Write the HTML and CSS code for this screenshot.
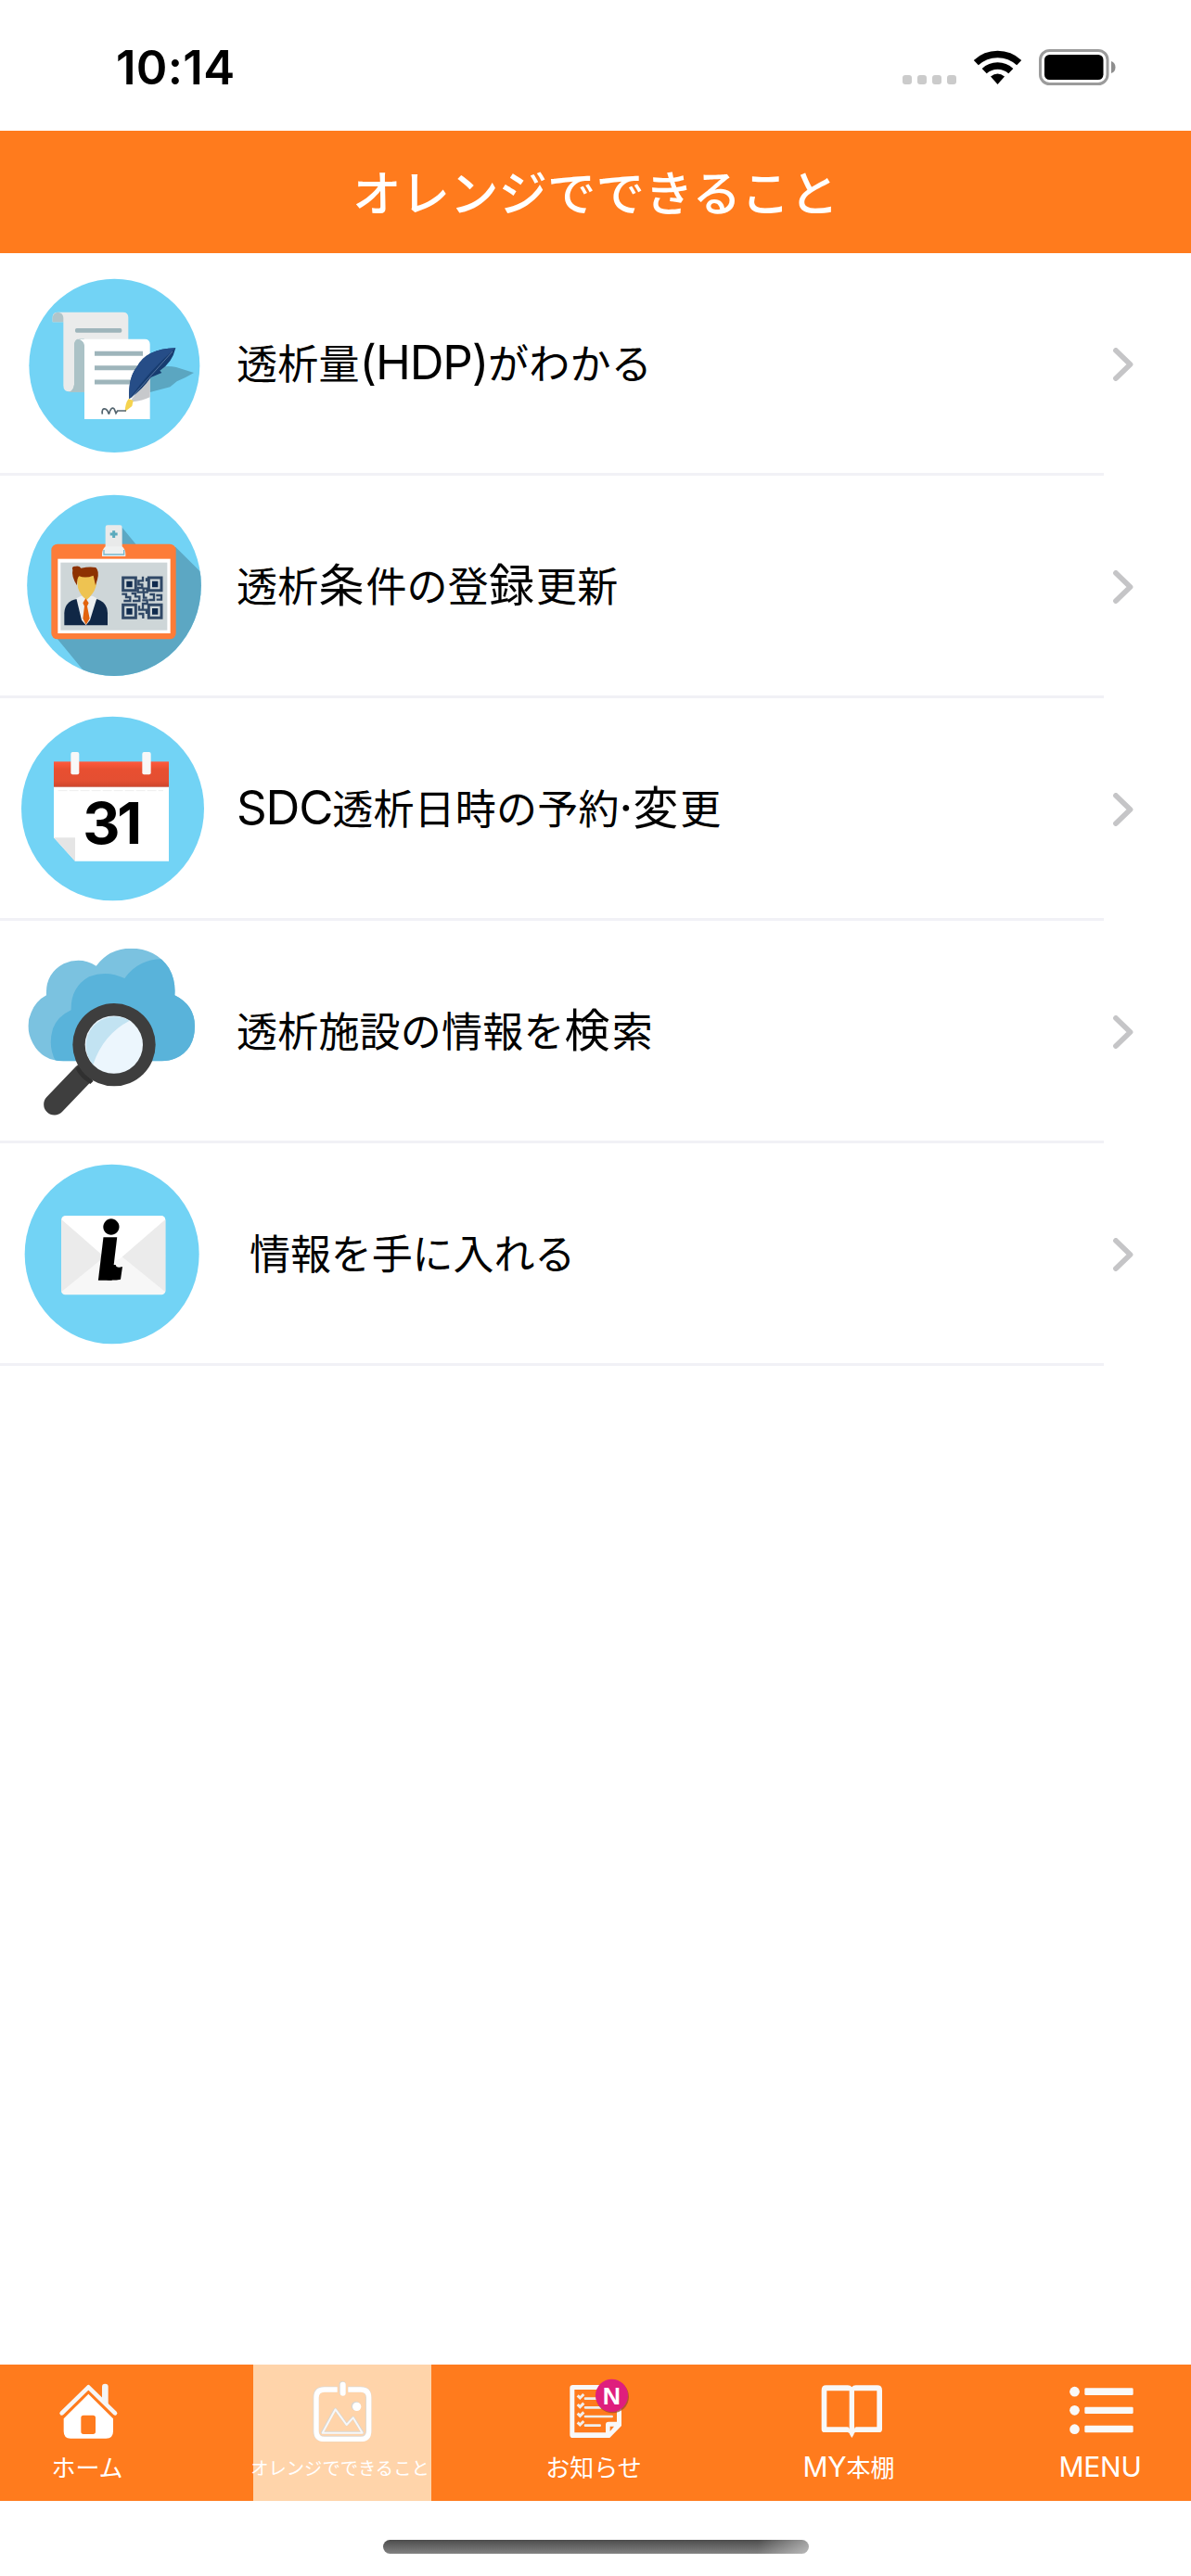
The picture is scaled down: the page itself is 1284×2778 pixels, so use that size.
FILE: index.html
```html
<!DOCTYPE html>
<html lang="ja">
<head>
<meta charset="utf-8">
<title>オレンジでできること</title>
<link rel="stylesheet" href="styles.css">
</head>
<body>
<div class="screen">
  <div class="status">
    <span class="time">10:14</span>
    <svg class="status-icons" viewBox="0 0 230 40" width="230" height="40">
      <g fill="#cbcbcb"><rect x="0" y="28" width="10" height="10" rx="3"/><rect x="16" y="28" width="10" height="10" rx="3"/><rect x="32" y="28" width="10" height="10" rx="3"/><rect x="48" y="28" width="10" height="10" rx="3"/></g>
      <g fill="none" stroke="#000" stroke-width="7.4"><path d="M79.300 14.600a34 34 0 0 1 46.400 0"/><path d="M88.200 23.600a21 21 0 0 1 28.600 0"/></g>
      <path d="M95 29.500q7.500-6 15 0L102.500 38z"/>
      <rect x="148.500" y="1.500" width="72.500" height="36" rx="10" fill="none" stroke="#9b9b9b" stroke-width="3"/>
      <rect x="153" y="6" width="63.500" height="27" rx="5.500"/>
      <path d="M225 13q4.500 1.500 4.500 6.500T225 26z" fill="#8e8e8e"/>
    </svg>
  </div>
  <header class="titlebar"><h1>オレンジでできること</h1></header>

  <ul class="list">
    <li class="row">
      <svg class="pic" viewBox="0 -21 720 711">
        <ellipse cx="370" cy="343" rx="276" ry="281" fill="#72d3f5"/>
        <path d="M170 202v-16q0-16 18-16h210q17 0 17 17v240H225q-20 0-20-20V202z" fill="#eaebeb"/>
        <path d="M170 202v-16q2-15 18-16 16 2 17 18v14z" fill="#b0c5ca"/>
        <path d="M272 256h-14q-18 2-18 22v126q-3 22-18 24h50z" fill="#abc2c6"/>
        <rect x="243" y="222" width="151" height="14" rx="5" fill="#9eb5bb"/>
        <path d="M250 257h218q17 0 17 17v242H273V278q-3-18-23-21z" fill="#fff"/>
        <path d="M250 257q-10 4-10 22v125q-3 22-18 24h51V278q-3-18-23-21z" fill="#abc2c6"/>
        <path d="M306 304h156M306 350h140M306 396h130" stroke="#9eb5bb" stroke-width="15"/>
        <path d="M485 368q35-32 85-20l57 18q-30 18-55 28l-22 18-65 17z" fill="#5ba6c1"/>
        <path d="M425 452l60-75v68q-25 12-55 15z" fill="#c7c9cc"/>
        <path d="M568 286q-95 2-126 62-28 35-24 103 42-30 70-70l35-15-6-7q40-25 51-73z" fill="#173c70"/>
        <path d="M568 286q-95 2-126 62-28 35-24 103 68-96 150-165z" fill="#264d87"/>
        <path d="M424 447L558 297" stroke="#55739e" stroke-width="3"/>
        <path d="M416 450l15 6-4 18-23 18q1-28 12-42z" fill="#f5d34e"/>
        <path d="M331 500q-3-20 10-17 8 4 11 17 8-28 18-16l5 13 5-8h28" fill="none" stroke="#53646e" stroke-width="5"/>
      </svg>
      <span class="label">透析量<span class="en hdp">(HDP)</span>がわかる</span>
      <svg class="chevron" viewBox="0 0 22 36"><path d="M3 3l15.500 15L3 33"/></svg>
    </li>
    <li class="row">
      <svg class="pic" viewBox="0 9 720 711">
        <clipPath id="badge-disc"><ellipse cx="369" cy="364" rx="281.500" ry="293"/></clipPath>
        <g clip-path="url(#badge-disc)">
          <path d="M80 60h580v610H80z" fill="#72d3f5"/>
          <path d="M180 530l115 140h370V336L568 240H447L393 174v120z" fill="#5ca7c3"/>
        </g>
        <rect x="166" y="230" width="403" height="308" rx="20" fill="#fd7c38"/>
        <rect x="187" y="278" width="364" height="241" fill="#fff"/>
        <rect x="196" y="290" width="345" height="219" fill="#ced6d8"/>
        <rect x="341" y="169" width="54" height="75" rx="7" fill="#e9eaea"/>
        <path d="M368 187v23M356 198h24" stroke="#5baabd" stroke-width="9"/>
        <path d="M341 238h54q11 10 11 24v8H330v-8q0-14 11-24z" fill="#eff1f1"/>
        <path d="M336 249v15h65v-15" fill="none" stroke="#77b7cc" stroke-width="4"/>
        <path d="M208 493v-40q2-38 40-45l60-1q39 8 40 47v39z" fill="#102746"/>
        <path d="M262 398h38l13 8-22 70-13 17-14-17-17-70z" fill="#eceff1"/>
        <path d="M249 345q2-15 6-17 35 15 52 0 8 18 3 40-7 23-30 43-22-17-28-40z" fill="#eec351"/>
        <path d="M277 406l10 15-5 10 8 40-12 20-10-20 5-40-5-10z" fill="#e2630e"/>
        <path d="M235 314q-5-13 10-12 12-2 17 6 28-6 48-2 12 12 5 38l-6 20-7-32q-25 10-46 2-7 5-7 30-19-30-14-50z" fill="#8d3202"/>
        <path d="M398 339h41v41h-41zM481 339h41v41h-41zM398 427h41v42h-41zM481 427h41v42h-41z" fill="none" stroke="#304866" stroke-width="9"/>
        <path d="M409 350h19v20h-19zM492 350h19v20h-19zM409 438h19v20h-19zM492 438h19v20h-19z" fill="#0f2a4d"/>
        <path d="M462 335v14h-14v12h12v11h-14v14h18v-12h12v12h-11v18h11M394 392h14v10h13v12h-21M425 390h13v10h13v14h-22M484 393h14v18h-17M505 396h17v14h-16M460 412h16v11h-14v20h12v13M450 430v13h10M448 456h15v15M474 340v11" fill="none" stroke="#304866" stroke-width="7"/>
      </svg>
      <span class="label">透析<span class="big">条</span>件の登<span class="big">録</span>更新</span>
      <svg class="chevron" viewBox="0 0 22 36"><path d="M3 3l15.500 15L3 33"/></svg>
    </li>
    <li class="row">
      <svg class="pic" viewBox="0 9 720 711">
        <defs><linearGradient id="cal-red" x1="0" y1="0" x2="0" y2="1"><stop offset="0" stop-color="#ff5a3d"/><stop offset=".3" stop-color="#e84f31"/><stop offset=".75" stop-color="#e44f32"/><stop offset="1" stop-color="#ce462d"/></linearGradient></defs>
        <ellipse cx="364.500" cy="366" rx="295.500" ry="298" fill="#72d3f5"/>
        <path d="M174 295h372v241H243l-69-76z" fill="#fff"/>
        <path d="M174 460h69v76z" fill="#e5e5e5"/>
        <rect x="174" y="214" width="372" height="82" fill="url(#cal-red)"/>
        <path d="M188 308h340" stroke="#eee" stroke-width="3" stroke-dasharray="30 6"/>
        <rect x="229" y="183" width="27" height="73" rx="6" fill="#f8f8f8"/><rect x="460" y="183" width="28" height="73" rx="6" fill="#f8f8f8"/>
        <text class="date" x="268" y="481">31</text>
      </svg>
      <span class="label"><span class="en sdc">SDC</span>透析日時の予約<span class="en dot">·</span><span class="big">変</span>更</span>
      <svg class="chevron" viewBox="0 0 22 36"><path d="M3 3l15.500 15L3 33"/></svg>
    </li>
    <li class="row">
      <svg class="pic" viewBox="0 9 720 711">
        <clipPath id="cloud"><path d="M205 463q-68 0-99-58-27-53-5-100 16-38 49-55-4-70 56-102 55-24 105 7 42-57 112-57 80 0 123 63 23 40 19 89 65 32 65 100 0 75-62 104-22 10-50 9z"/></clipPath>
        <g clip-path="url(#cloud)"><path d="M80 80h560v400H80z" fill="#7bc2e0"/><path d="M180 463q-26-48-9-105 15-40 59-60-2-74 58-108 57-23 115 5 45-62 120-62l130 20v330H185z" fill="#59b3da"/></g>
        <path d="M270 505L176 603" stroke="#3e3e3e" stroke-width="69" stroke-linecap="round"/>
        <path d="M256 478q15 30 46 49l-10 10q-32-20-47-48z" fill="#303030"/>
        <circle cx="369" cy="410" r="134" fill="#3e3e3e"/>
        <circle cx="368.500" cy="410" r="93.500" fill="#ecf6fd"/>
        <path d="M301 474a93.500 93.500 0 0 1 118-142q-85 44-118 142z" fill="#c2e3f2"/>
      </svg>
      <span class="label">透析施設の情報を<span class="big">検</span>索</span>
      <svg class="chevron" viewBox="0 0 22 36"><path d="M3 3l15.500 15L3 33"/></svg>
    </li>
    <li class="row">
      <svg class="pic" viewBox="0 9 720 711">
        <ellipse cx="362" cy="367.500" rx="282" ry="290.500" fill="#72d3f5"/>
        <rect x="198" y="244" width="337" height="255" rx="13" fill="#f7f7f7"/>
        <path d="M198 255v235L340 374zM535 255v235L393 374z" fill="#ebebeb"/>
        <path d="M200 256q2-12 12-12h310q11 0 12 12L393 378q-27 23-54 0z" fill="#fff"/>
        <text class="info" x="318" y="446">i</text>
        <path d="M360 402h14q2 12 22 6l-6 41q-28 5-50 0z"/>
      </svg>
      <span class="label last">情報を手に入れる</span>
      <svg class="chevron" viewBox="0 0 22 36"><path d="M3 3l15.500 15L3 33"/></svg>
    </li>
  </ul>

  <nav class="tabs">
    <div class="tab">
      <svg class="tab-icon" viewBox="0 60 576 270">
        <path d="M330 170v-39q0-9 10-9t10 9v58z" fill="#f4f4f4"/>
        <path d="M200 217l86-84 86 84" fill="none" stroke="#f6f6f6" stroke-width="14" stroke-linecap="round" stroke-linejoin="round"/>
        <path fill-rule="evenodd" d="M286 155l80 80v41q0 23-23 23H228q-22 0-22-23v-41zM270 224q-8 0-8 8v45q0 8 8 8h31q8 0 8-8v-45q0-8-8-8z" fill="#fff"/>
      </svg>
      <span class="tab-label">ホーム</span>
    </div>
    <div class="tab active">
      <svg class="tab-icon" viewBox="819 60 576 270">
        <g fill="none" stroke="#dcd9d4" stroke-width="19" transform="translate(-1 -1)"><path d="M1091 141h-42q-26 0-26 26v108q0 26 26 26h118q26 0 26-26V167q0-26-26-26h-41"/></g>
        <g fill="none" stroke="#fff" stroke-width="16" stroke-linejoin="round"><path d="M1091 141h-42q-26 0-26 26v108q0 26 26 26h118q26 0 26-26V167q0-26-26-26h-41"/></g>
        <path d="M1042 280l42-76 37 50 21-23 31 49z" fill="none" stroke="#d8d6d2" stroke-width="9" stroke-linejoin="round"/>
        <path d="M1043 281l42-76 36 50 21-23 30 49z" fill="none" stroke="#f8f8f8" stroke-width="6" stroke-linejoin="round"/>
        <circle cx="1151" cy="194" r="15" fill="#d8d6d2"/><circle cx="1154" cy="196" r="14" fill="#fff"/>
        <rect x="1097" y="114" width="21" height="46" rx="10" fill="#d8d6d2"/><rect x="1100" y="116" width="18" height="45" rx="9" fill="#fff"/>
      </svg>
      <span class="tab-label small">オレンジでできること</span>
    </div>
    <div class="tab">
      <svg class="tab-icon" viewBox="138 60 576 270">
        <path fill-rule="evenodd" d="M353 126h157v132l-38 39H353q-10 0-10-10V136q0-10 10-10zM358 141v139h101v-26q0-9 9-9h27V141zM473 260v16l13-16z" fill="#f8f8f8"/>
        <path d="M393 170h50M393 199h50M393 228h86M393 257h47" stroke="#f0eeec" stroke-width="8" stroke-linecap="round"/>
        <path d="M368 160l8 8 12-12M368 189l8 8 12-12M368 218l8 8 12-12M368 247l8 8 12-12" fill="none" stroke="#f0eeec" stroke-width="9"/>
        <ellipse cx="481" cy="164" rx="53" ry="53" fill="#9a4b2c" opacity=".75"/>
        <ellipse cx="478.500" cy="160" rx="52.500" ry="53" fill="#df1e7d"/>
        <text class="new" x="449" y="188">N</text>
      </svg>
      <span class="tab-label">お知らせ</span>
    </div>
    <div class="tab">
      <svg class="tab-icon" viewBox="957 60 576 270">
        <path fill-rule="evenodd" d="M1172 127h70q9 0 13 6 4-6 13-6h69q16 0 16 16v126q0 10-10 10h-76q-5 1-6 8l-6 10-6-10q-1-7-8-8h-74q-10 0-10-10V143q0-16 15-16zM1174 145v117h66q7 0 7 7V145zM1263 145v124q0-7 7-7h66V145z" fill="#f8f8f8"/>
      </svg>
      <span class="tab-label my"><span class="tab-en">MY</span>本棚</span>
    </div>
    <div class="tab">
      <svg class="tab-icon" viewBox="624 60 576 270">
        <g fill="#f9f9f9"><circle cx="823.500" cy="147.500" r="16"/><circle cx="823.500" cy="208" r="16"/><circle cx="823.500" cy="269" r="16"/><rect x="856" y="136" width="157" height="23" rx="4"/><rect x="856" y="197" width="157" height="22" rx="4"/><rect x="856" y="257" width="157" height="23" rx="4"/></g>
      </svg>
      <span class="tab-label"><span class="tab-en">MENU</span></span>
    </div>
  </nav>
  <div class="home-area"><div class="home-bar"></div></div>
</div>
</body>
</html>
```
FILE: styles.css
```css
* { box-sizing: border-box; }
body { margin: 0; background: #fff; font-family: "Inter", "Noto Sans CJK JP", sans-serif; color: #000; }
.screen { width: 1284px; height: 2778px; display: flex; flex-direction: column; overflow: hidden; }

.status { height: 141px; flex: none; display: flex; justify-content: space-between; align-items: flex-start; padding: 53px 81px 0 125px; }
.time { font-size: 51px; font-weight: 600; line-height: 39px; letter-spacing: 0.300px; }
.status-icons { display: block; }

.titlebar { height: 132px; flex: none; background: #ff7b1d; display: flex; align-items: center; justify-content: center; padding-bottom: 4px; }
.titlebar h1 { margin: 0; color: #fff; font-family: "Noto Sans CJK JP", sans-serif; font-size: 52.500px; font-weight: 500; line-height: 75px; white-space: nowrap; }

.list { list-style: none; margin: 0; padding: 0; flex: 1; }
.row { height: 240px; padding-bottom: 3px; display: flex; align-items: center; padding-right: 62px; background: linear-gradient(#f1f1f6, #f1f1f6) left bottom / 1190px 3px no-repeat; }
.pic { width: 240px; height: 237px; flex: none; display: block; }
.label { flex: 1; padding: 0 0 4px 15px; font-family: "Noto Sans CJK JP", sans-serif; font-size: 44px; line-height: 60px; letter-spacing: 0.200px; white-space: nowrap; }
.label.last { padding-left: 29px; letter-spacing: -0.100px; }
.en { font-family: "Inter", sans-serif; font-size: 51px; line-height: 1; }
.hdp { letter-spacing: -1.200px; }
.sdc { letter-spacing: -1.200px; }
.dot { letter-spacing: 0; }
.big { font-size: 49px; line-height: 1; letter-spacing: 2px; }
.chevron { width: 22px; height: 36px; flex: none; display: block; margin-top: 3px; }
.chevron path { fill: none; stroke: #c5c5c7; stroke-width: 5.800px; stroke-linecap: round; stroke-linejoin: round; }
.date { font: bold 187px "Inter", sans-serif; letter-spacing: -10px; }
.info { font: italic 900 252px "Lato", sans-serif; stroke: #000; stroke-width: 10px; }
.new { font: bold 80px "Liberation Sans", sans-serif; fill: #fff; }

.tabs { height: 147px; flex: none; display: flex; justify-content: space-between; background: #ff7b1d; }
.tab { width: 192px; display: flex; flex-direction: column; align-items: center; }
.tab.active { background: #ffd4aa; }
.tab-icon { width: 192px; height: 90px; flex: none; display: block; }
.tab-label { color: #fff; font-family: "Noto Sans CJK JP", sans-serif; font-size: 26px; line-height: 40px; white-space: nowrap; margin-right: 4px; }
.tab-label.my { margin-right: 0; }
.tab-en { font-family: "Inter", sans-serif; font-size: 30px; line-height: 1; letter-spacing: -0.300px; }
.tab-label.small { font-size: 19.300px; line-height: 42px; margin-right: 5px; }
.home-area { height: 81px; flex: none; padding-top: 42px; display: flex; justify-content: center; align-items: flex-start; }
.home-bar { width: 459px; height: 15px; border-radius: 8px; background: linear-gradient(90deg, transparent 88%, rgba(255,255,255,.45)), linear-gradient(#4c4c4c, #828282); }
```
